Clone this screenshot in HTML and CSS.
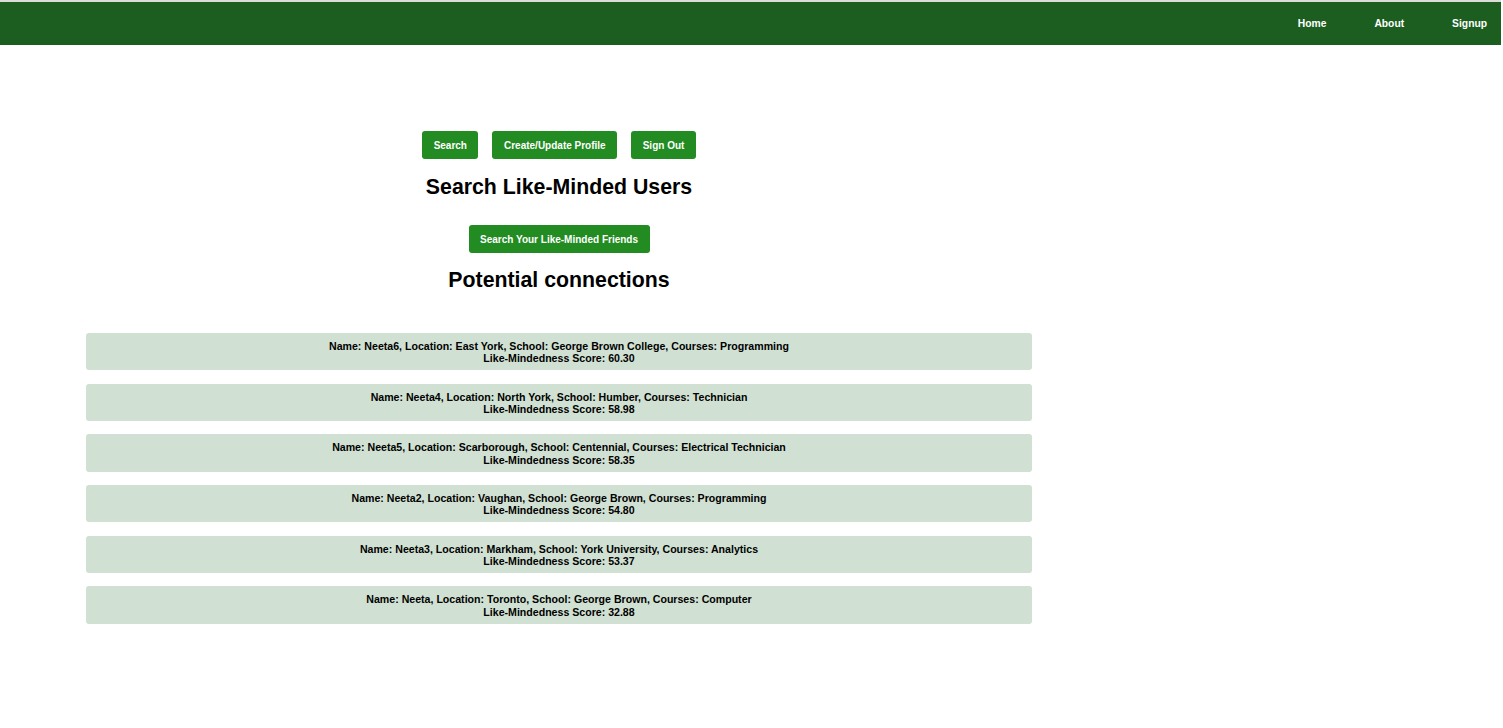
FILE: index.html
```html
<!DOCTYPE html>
<html>
<head>
<meta charset="utf-8">
<link rel="stylesheet" href="styles.css">
</head>
<body>
<nav class="navbar">
  <a class="nav-link" href="#">Home</a>
  <a class="nav-link" href="#">About</a>
  <a class="nav-link" href="#">Signup</a>
</nav>
<main class="content">
  <div class="actions">
    <button class="btn">Search</button>
    <button class="btn">Create/Update Profile</button>
    <button class="btn">Sign Out</button>
  </div>
  <h2 class="title title-search">Search Like-Minded Users</h2>
  <button class="btn btn-find">Search Your Like-Minded Friends</button>
  <h2 class="title title-conn">Potential connections</h2>
  <ul class="results">
    <li class="card">Name: Neeta6, Location: East York, School: George Brown College, Courses: Programming<br>Like-Mindedness Score: 60.30</li>
    <li class="card">Name: Neeta4, Location: North York, School: Humber, Courses: Technician<br>Like-Mindedness Score: 58.98</li>
    <li class="card">Name: Neeta5, Location: Scarborough, School: Centennial, Courses: Electrical Technician<br>Like-Mindedness Score: 58.35</li>
    <li class="card">Name: Neeta2, Location: Vaughan, School: George Brown, Courses: Programming<br>Like-Mindedness Score: 54.80</li>
    <li class="card">Name: Neeta3, Location: Markham, School: York University, Courses: Analytics<br>Like-Mindedness Score: 53.37</li>
    <li class="card">Name: Neeta, Location: Toronto, School: George Brown, Courses: Computer<br>Like-Mindedness Score: 32.88</li>
  </ul>
</main>
</body>
</html>
```

FILE: styles.css
```css
* { box-sizing: border-box; }
body {
  margin: 0;
  font-family: "Liberation Sans", Arial, sans-serif;
  background: #fff;
  color: #000;
}
.navbar {
  width: 1501px;
  height: 45px;
  border-top: 2px solid #dcdcd8;
  background: #1b5e1f;
  display: flex;
  justify-content: flex-end;
  align-items: center;
  gap: 48px;
  padding-right: 14px;
}
.nav-link {
  color: #fff;
  text-decoration: none;
  font-size: 10.3px;
  font-weight: bold;
}
.content {
  width: 946px;
  margin-left: 86px;
  display: flex;
  flex-direction: column;
  align-items: center;
  padding-top: 86px;
}
.actions {
  display: flex;
  gap: 14px;
}
.btn {
  background: #228b22;
  color: #fff;
  border: none;
  border-radius: 3px;
  font-family: "Liberation Sans", Arial, sans-serif;
  font-size: 10px;
  font-weight: bold;
  height: 28px;
  padding: 0 11.5px;
  cursor: pointer;
}
.title {
  font-size: 21.3px;
  font-weight: bold;
  margin: 0;
  line-height: 24px;
}
.title-search {
  margin-top: 16px;
}
.btn-find {
  margin-top: 26px;
}
.title-conn {
  margin-top: 15px;
}
.results {
  list-style: none;
  margin: 41px 0 0 0;
  padding: 0;
  width: 100%;
  display: flex;
  flex-direction: column;
  gap: 13.4px;
}
.card {
  background: #d0e0d2;
  border-radius: 3px;
  text-align: center;
  font-size: 10.6px;
  font-weight: bold;
  line-height: 12.3px;
  padding: 7px 0 0;
  height: 37.3px;
}
```
